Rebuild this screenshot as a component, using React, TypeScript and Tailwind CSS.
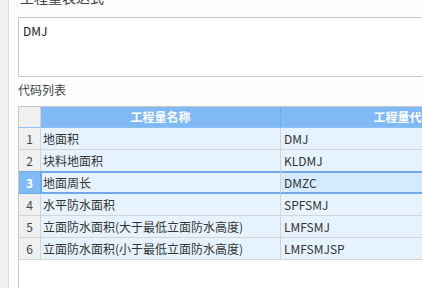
import React from "react";

const rows = [
  { n: "1", name: "地面积", code: "DMJ" },
  { n: "2", name: "块料地面积", code: "KLDMJ" },
  { n: "3", name: "地面周长", code: "DMZC", sel: true },
  { n: "4", name: "水平防水面积", code: "SPFSMJ" },
  { n: "5", name: "立面防水面积(大于最低立面防水高度)", code: "LMFSMJ" },
  { n: "6", name: "立面防水面积(小于最低立面防水高度)", code: "LMFSMJSP" },
];

export default function App() {
  return (
    <div
      className="w-[422px] h-[288px] overflow-hidden flex bg-[#fdfdfd] text-[#333]"
      style={{ fontFamily: '"Noto Sans CJK SC", "Noto Sans", sans-serif' }}
    >
      <div className="w-[9px] shrink-0 bg-[#f0f0f0] border-r border-[#dadada]" />
      <div className="shrink-0 w-[600px] pl-[9px] flex flex-col">
        <div className="-mt-[11px] h-[17px] pl-[2px] text-[14px] leading-[17px] text-[#444]">工程量表达式</div>
        <div className="mt-[11px] h-[60px] border border-[#c8c8c8] bg-white px-[4px] pt-[5px] text-[12px] leading-[16px] text-[#1a1a1a]">
          DMJ
        </div>
        <div className="mt-[5px] h-[16px] text-[12px] leading-[16px] text-[#444]">代码列表</div>
        <div className="mt-[8px] flex-1 border-l border-t border-[#c8c8c8] bg-white">
          <div className="flex h-[21px] border-b border-[#8cc0f2]">
            <div className="w-[22px] shrink-0 bg-[#f0f0f0] border-r border-[#d4d4d4]" />
            <div className="w-[240px] shrink-0 bg-[#80b9f4] border-r border-[#6ea9eb] text-white font-bold text-[12px] leading-[20px] text-center">
              工程量名称
            </div>
            <div className="w-[246px] shrink-0 bg-[#80b9f4] border-r border-[#6ea9eb] text-white font-bold text-[12px] leading-[20px] text-center">
              工程量代码
            </div>
          </div>
          {rows.map((r, i) => (
            <div
              key={r.n}
              className={
                "flex h-[22px] border-b text-[12px] leading-[21px] " +
                (r.sel || rows[i + 1]?.sel ? "border-[#71a9e8]" : "border-[#d4d4d4]") +
                (r.sel ? " shadow-[inset_0_1px_0_#71a9e8,inset_0_-1px_0_#71a9e8]" : "")
              }
            >
              <div
                className={
                  "w-[22px] shrink-0 border-r text-center " +
                  (r.sel
                    ? "bg-[#80bbf5] text-white font-bold border-[#71a9e8]"
                    : "bg-[#f0f0f0] text-[#444] border-[#d4d4d4]")
                }
              >
                {r.n}
              </div>
              <div
                className={
                  "w-[240px] shrink-0 bg-[#e6f3ff] border-r border-[#d4d4d4] pl-[2px] whitespace-nowrap overflow-hidden" +
                  (r.sel ? " shadow-[inset_1px_0_0_#71a9e8,inset_0_1px_0_#71a9e8,inset_0_-1px_0_#71a9e8]" : "")
                }
              >
                {r.name}
              </div>
              <div
                className={
                  "w-[246px] shrink-0 border-r border-[#d4d4d4] pl-[3px] " +
                  (r.sel ? "bg-[#d6eafd] shadow-[inset_0_1px_0_#71a9e8,inset_0_-1px_0_#71a9e8]" : "bg-[#e6f3ff]")
                }
              >
                {r.code}
              </div>
            </div>
          ))}
        </div>
      </div>
    </div>
  );
}
